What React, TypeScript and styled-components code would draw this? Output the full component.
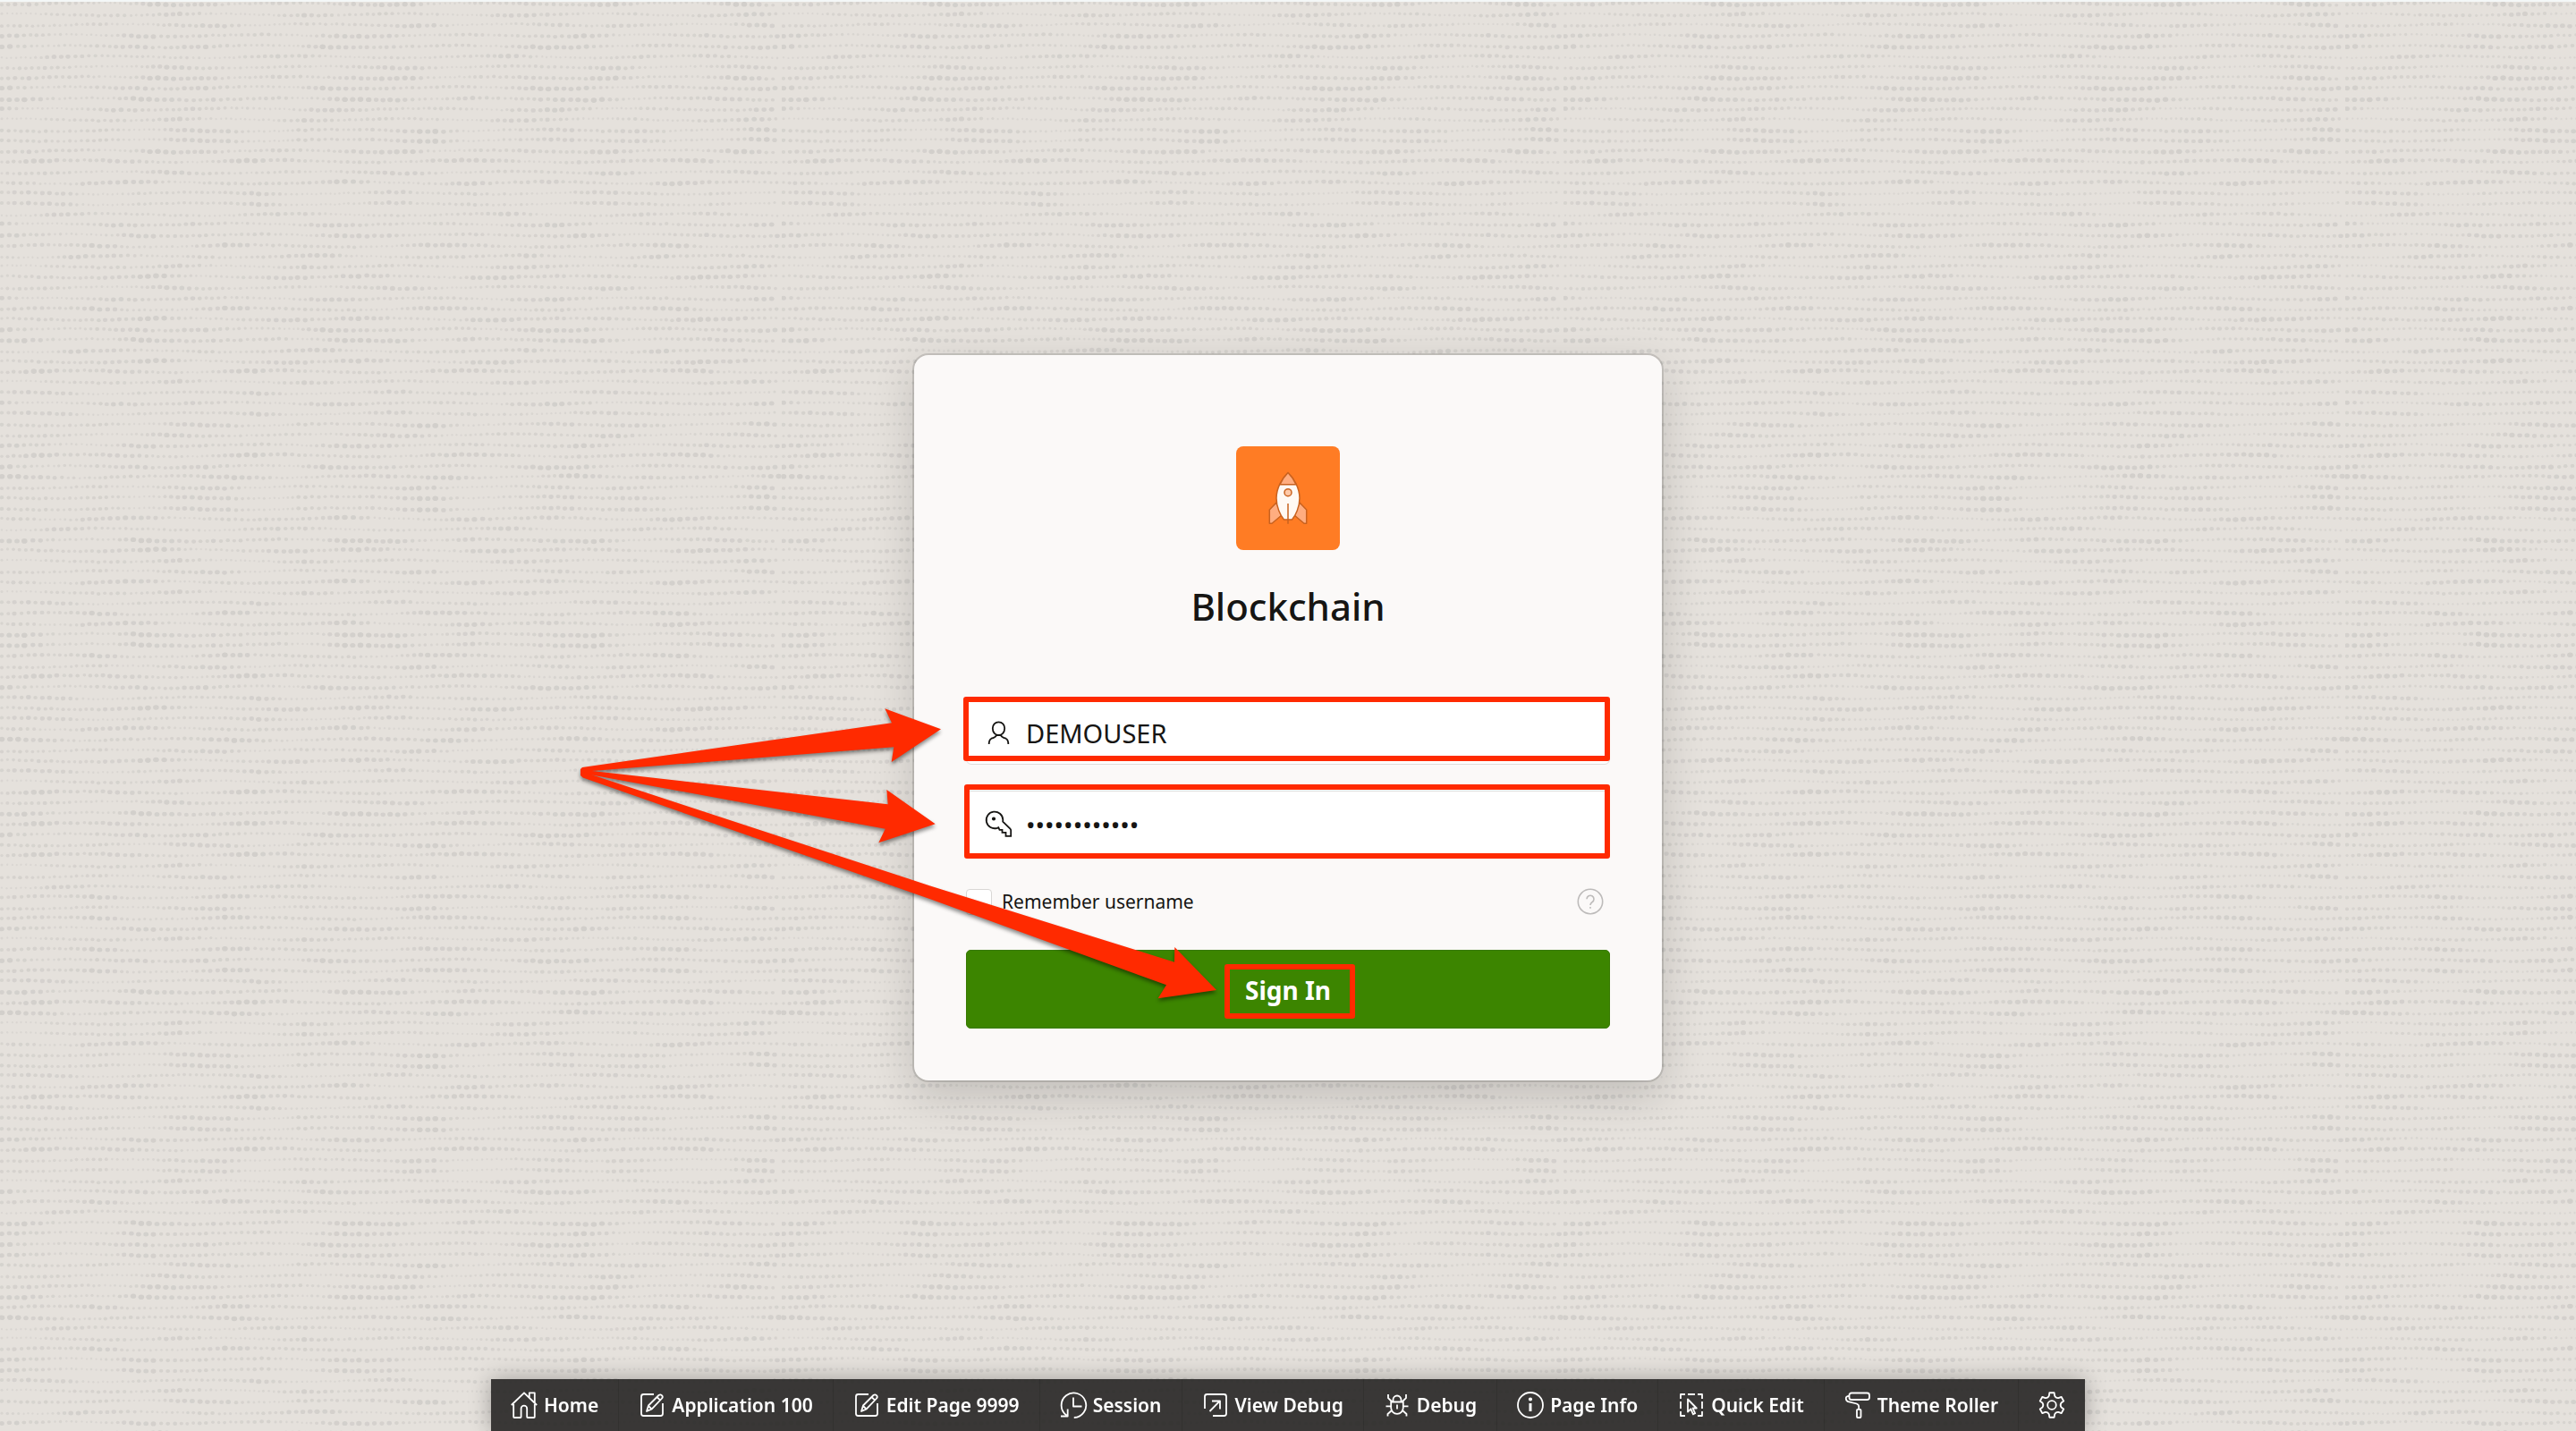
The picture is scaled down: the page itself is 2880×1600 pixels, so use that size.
import React, { useState } from "react";
import styled, { createGlobalStyle } from "styled-components";

/* ---------- woven dot background ---------- */

const TILE_WIDTH = 874;
const ROW_PITCH = 11.75;
const ROW_COUNT = 138;
const VARIANTS = 18;

function randomSource(seed: number) {
  let s = seed;
  return () => {
    s = (s * 1664525 + 1013904223) % 4294967296;
    return s / 4294967296;
  };
}

/** One line of dots whose size swells and shrinks slowly along the row. */
function dotRow(seed: number) {
  const rnd = randomSource(seed * 7919 + 13);
  const phases = [rnd(), rnd(), rnd(), rnd()].map((v) => v * Math.PI * 2);
  const weight = 0.32 + rnd() * 0.25;
  const dots: string[] = [];
  let x = 2;
  while (x < TILE_WIDTH - 3) {
    const t = (x / TILE_WIDTH) * Math.PI * 2;
    const wave =
      Math.sin(t * 4 + phases[0]) * 0.24 +
      Math.sin(t * 7 + phases[1]) * 0.22 +
      Math.sin(t * 12 + phases[2]) * 0.12;
    const size = Math.min(1, Math.max(0, weight + wave + (rnd() - 0.5) * 0.3));
    const rx = 1.1 + size * 2.2;
    const ry = 1.2 + size * 1.6;
    const y = Math.sin(t * 4 + phases[3]) * 1.1 + (rnd() - 0.5) * 0.8;
    const shade = (0.6 + size * 0.4).toFixed(2);
    dots.push(
      `<ellipse cx='${x.toFixed(1)}' cy='${y.toFixed(1)}' rx='${rx.toFixed(1)}' ry='${ry.toFixed(1)}' opacity='${shade}'/>`
    );
    x += 4.8 + size * 3.8 + rnd() * 1;
  }
  return `<g id='r${seed}'>${dots.join("")}</g>`;
}

function weave() {
  const rnd = randomSource(42);
  const height = Math.round(ROW_COUNT * ROW_PITCH);
  const defs = Array.from({ length: VARIANTS }, (_, i) => dotRow(i)).join("");
  const rows = Array.from({ length: ROW_COUNT }, (_, i) => {
    const y = (2.5 + i * ROW_PITCH + (rnd() - 0.5)).toFixed(1);
    return `<use href='#r${Math.floor(rnd() * VARIANTS)}' y='${y}'/>`;
  }).join("");
  const svg = `<svg xmlns='http://www.w3.org/2000/svg' width='${TILE_WIDTH}' height='${height}' fill='#d2cfcb'><defs>${defs}</defs>${rows}</svg>`;
  return `url("data:image/svg+xml,${encodeURIComponent(svg).replace(/'/g, "%27")}")`;
}

/* ---------- layout ---------- */

const GlobalStyle = createGlobalStyle`
  *, *::before, *::after { box-sizing: border-box; }
  body {
    margin: 0;
    font-family: "Noto Sans", "Open Sans", sans-serif;
    color: #161513;
  }
  button, input { font-family: inherit; color: inherit; }
`;

const Page = styled.main`
  display: flex;
  align-items: center;
  justify-content: center;
  min-height: 100vh;
  padding-top: 3px;
  border-top: 2px solid #f4f7f7;
  overflow: hidden;
  background: #e5e1dc ${weave()} 0 0 padding-box;
`;

const Card = styled.section`
  position: relative;
  width: 836px;
  max-width: 100%;
  padding: 102px 58px 58px;
  border-radius: 16px;
  background: #fbf9f8;
  box-shadow: 0 0 0 2px rgba(0, 0, 0, 0.13), 0 16px 48px rgba(0, 0, 0, 0.16);
`;

const CardHeader = styled.header`
  display: flex;
  flex-direction: column;
  align-items: center;
  gap: 35px;
  margin-bottom: 77px;
`;

const AppLogo = styled.svg`
  width: 116px;
  height: 116px;
  border-radius: 8px;
  background: #ff7c24;
`;

const Title = styled.h1`
  margin: 0;
  font-size: 42px;
  line-height: 56px;
  font-weight: 500;
`;

const Form = styled.form`
  display: flex;
  flex-direction: column;
`;

const Fields = styled.div`
  display: grid;
  gap: 29px;
`;

const Field = styled.label`
  display: flex;
  align-items: center;
  gap: 14px;
  height: 72px;
  padding: 0 20px;
  border: 1px solid #dfdddb;
  border-radius: 6px;
  background: #fff;
`;

const FieldIcon = styled.svg`
  flex: none;
  width: 32px;
  height: 32px;
  fill: none;
  stroke: #161513;
  stroke-width: 1.8;
`;

const TextBox = styled.input<{ $size: number }>`
  flex: 1;
  min-width: 0;
  height: 100%;
  padding: 0;
  border: 0;
  outline: 0;
  background: transparent;
  font-size: ${(p) => p.$size}px;

  &[type="password"] {
    padding-top: 4px;
  }
`;

const Options = styled.div`
  display: flex;
  align-items: center;
  justify-content: space-between;
  height: 32px;
  margin: 36px 6px 38px 0;
`;

const Remember = styled.label`
  display: flex;
  align-items: center;
  gap: 11px;
  font-size: 21px;
  line-height: 32px;
`;

const CheckBox = styled.input`
  appearance: none;
  width: 29px;
  height: 29px;
  margin: 0;
  border: 1px solid #d9d7d5;
  border-radius: 4px;
  background: #fff;
  &:checked {
    background: #3c8500;
  }
`;

const HelpButton = styled.button`
  display: flex;
  padding: 0;
  border: 0;
  background: transparent;
  svg {
    width: 32px;
    height: 32px;
    fill: none;
    stroke: #bdbbba;
    stroke-width: 1.6;
  }
`;

const SignIn = styled.button`
  height: 88px;
  padding: 2px 0 0;
  border: 1px solid #377a00;
  border-radius: 5px;
  background: #3c8500;
  color: #fff;
  font-size: 28px;
  font-weight: 700;
`;

/* Call-outs drawn over the form, anchored to the card. */
const Callouts = styled.svg`
  position: absolute;
  left: -382px;
  top: 363px;
  width: 1180px;
  height: 400px;
  pointer-events: none;
  fill: #ff2a00;

  rect {
    fill: none;
    stroke: #ff2a00;
    stroke-width: 6;
    stroke-linejoin: round;
  }
  g {
    filter: drop-shadow(0 3px 2px rgba(0, 0, 0, 0.45));
  }
`;

const Toolbar = styled.nav`
  position: fixed;
  bottom: 0;
  left: 50%;
  transform: translateX(-50%);
  display: flex;
  height: 58px;
  background: rgba(38, 37, 35, 0.9);
  box-shadow: 0 0 24px rgba(0, 0, 0, 0.3);
`;

const ToolButton = styled.button`
  display: flex;
  align-items: center;
  gap: 6px;
  padding: 0 22px 0 21px;
  border: 0;
  border-right: 1px solid rgba(0, 0, 0, 0.12);
  background: transparent;
  color: #fff;
  font-size: 21px;
  font-weight: 600;
  white-space: nowrap;

  &:last-child {
    padding: 0 21px;
    border-right: 0;
  }
  svg {
    width: 32px;
    height: 32px;
    fill: none;
    stroke: #fff;
    stroke-width: 1.8;
    stroke-linejoin: round;
  }
`;

/* ---------- icons ---------- */

function gearPath() {
  const pts: string[] = [];
  for (let i = 0; i < 6; i++) {
    const base = -90 + i * 60;
    const at = (deg: number, r: number) => {
      const a = ((base + deg) * Math.PI) / 180;
      return `${(16 + Math.cos(a) * r).toFixed(2)} ${(16 + Math.sin(a) * r).toFixed(2)}`;
    };
    pts.push(`${i ? "L" : "M"}${at(-11, 14)}L${at(11, 14)}L${at(17, 10.8)}Q${at(30, 8.8)} ${at(43, 10.8)}`);
  }
  return pts.join("") + "Z";
}

const edit = (
  <>
    <path d="M18 4H6.500A2.500 2.500 0 0 0 4 6.500v19A2.500 2.500 0 0 0 6.500 28h19a2.500 2.500 0 0 0 2.500-2.500V14" />
    <path d="M10 23l2-6.500L23.500 5q1.700-1.400 3.400.1t.2 3.400L15.800 20.400zM21.500 7l3.700 3.600M12 17l3.500 3.300" />
  </>
);

const tools: { label: string; icon: React.ReactNode }[] = [
  {
    label: "Home",
    icon: (
      <path d="M4.200 13v16.200q0 .8.8.8h6.800q.8 0 .8-.8V20a3.300 3.300 0 0 1 6.600 0v9.200q0 .8.8.8h7q.8 0 .8-.8V13M1.800 16L16 2.300 30.200 16M21.800 7.800V2.400h6V13.500" />
    ),
  },
  { label: "Application 100", icon: edit },
  { label: "Edit Page 9999", icon: edit },
  {
    label: "Session",
    icon: <path d="M8.500 27.500A13.800 13.800 0 1 1 16.800 30M9.700 20.500V28.500H2M16 7.500v10h9.500" />,
  },
  {
    label: "View Debug",
    icon: (
      <path d="M4 20V6.500A2.500 2.500 0 0 1 6.500 4h19A2.500 2.500 0 0 1 28 6.500v19a2.500 2.500 0 0 1-2.500 2.500H13M9.500 23L20.600 11.700M12 11.500h9v9" />
    ),
  },
  {
    label: "Debug",
    icon: (
      <path d="M9.200 12.500h13.600V19a6.800 6.800 0 0 1-13.600 0zM11.500 12.500V10a4.500 4.500 0 0 1 9 0v2.500M16 15.500v5M3.500 17.300h5.700M22.800 17.300h5.700M6 4v4.200l4.500 4.300M26 4v4.200l-4.500 4.300M5.500 28.500V26l5-4.500M26.500 28.500V26l-5-4.500" />
    ),
  },
  {
    label: "Page Info",
    icon: (
      <>
        <circle cx="16" cy="16" r="14" />
        <circle cx="16" cy="9.500" r="1.200" fill="#fff" />
        <path d="M16 14v9" strokeWidth="3" />
      </>
    ),
  },
  {
    label: "Quick Edit",
    icon: (
      <>
        <path d="M4 9V4h5M12 4h8M23 4h5v5M28 12v8M28 23v5h-5M9 28H4v-5M4 20v-8" />
        <path d="M12 9.500v14l3.400-3.200 2.600 6 2.200-1-2.600-5.800h4.200z" />
      </>
    ),
  },
  {
    label: "Theme Roller",
    icon: (
      <>
        <rect x="6.500" y="2.500" width="22.500" height="7.500" rx="2.500" />
        <path d="M6.500 5.800Q2.800 5.800 2.800 8.500t2.400 3.700l9.500 2.300q2.500.8 2.500 3.300v3" />
        <rect x="15" y="20.800" width="4.500" height="9.200" rx="1" />
      </>
    ),
  },
];

function Rocket() {
  return (
    <AppLogo viewBox="0 0 116 116" role="img" aria-label="Rocket" stroke="#c9621f" strokeWidth="1.500" strokeLinejoin="round">
      <path fill="#ffad80" d="M45 63L37.300 71V86.300H40L51 77zM71 63L78.700 71V86.300H76L65 77z" />
      <path fill="#fff9f4" d="M58 29.500C51 36 45 47 45 58c0 10 4.500 19.500 8.500 24h9C66.500 77.500 71 68 71 58 71 47 65 36 58 29.500z" />
      <path fill="#ffad80" d="M58 29.500C54 33.500 51 38 49 42.700h18C65 38 62 33.500 58 29.500z" />
      <circle fill="#ffc9a8" cx="58" cy="51.700" r="4" />
      <path d="M58 64v22.700" />
    </AppLogo>
  );
}

function Arrows() {
  return (
    <Callouts viewBox="640 760 1180 400" aria-hidden="true">
      <rect x="1080" y="782" width="717" height="66" />
      <rect x="1081" y="880" width="716" height="77" />
      <rect x="1372" y="1081" width="140" height="55" />
      <g>
        <path d="M651 858L997 808.300 989.300 792.300 1052 815.300 996.700 852 999.300 835.300 662 862 649 866V860z" />
        <path d="M650 860L662 862 992.700 899.300 991.300 883 1045.700 921.300 982.300 942.300 989.700 926.700 663 866.700 649 867z" />
        <path d="M650 862L663 866.700 1040 990.500 1313 1075.700 1313.300 1059 1360 1107 1294.700 1116.300 1304 1101.300 1040 1005.300 651.700 869.500 649 867z" />
      </g>
    </Callouts>
  );
}

export default function App() {
  const [user, setUser] = useState("DEMOUSER");
  const [password, setPassword] = useState("blockchain21");
  const [remember, setRemember] = useState(false);

  return (
    <>
      <GlobalStyle />
      <Page>
        <Card>
          <CardHeader>
            <Rocket />
            <Title>Blockchain</Title>
          </CardHeader>
          <Form onSubmit={(e) => e.preventDefault()}>
            <Fields>
              <Field>
                <FieldIcon viewBox="0 0 32 32" aria-hidden="true">
                  <path d="M15.500 4.300c4 0 6.700 3 6.700 6.900 0 4.600-2.800 7.800-6.700 7.800s-6.700-3.200-6.700-7.800c0-3.900 2.700-6.900 6.700-6.900zM13 18.500c0 3-2.500 3-5.500 4.200-2.200 1-2.800 2.500-2.800 6.300M18 18.500c0 3 2.500 3 5.500 4.200 2.200 1 2.800 2.500 2.800 6.300" />
                </FieldIcon>
                <TextBox $size={29} aria-label="Username" value={user} onChange={(e) => setUser(e.target.value)} />
              </Field>
              <Field>
                <FieldIcon viewBox="0 0 32 32" aria-hidden="true">
                  <path d="M20.300 12.500A9.300 9.300 0 1 0 13.800 21.800l1.500-.6 1.200 2.600h3v3h4v4h5.700v-6.300q0-1-.8-1.800l-8.200-8z" />
                  <circle cx="10" cy="11.500" r="1.200" fill="#161513" stroke="#161513" />
                </FieldIcon>
                <TextBox
                  $size={28}
                  type="password"
                  aria-label="Password"
                  value={password}
                  onChange={(e) => setPassword(e.target.value)}
                />
              </Field>
            </Fields>
            <Options>
              <Remember>
                <CheckBox type="checkbox" checked={remember} onChange={(e) => setRemember(e.target.checked)} />
                Remember username
              </Remember>
              <HelpButton type="button" aria-label="Help">
                <svg viewBox="0 0 32 32">
                  <circle cx="16" cy="16" r="13.700" />
                  <path d="M12 13.200a4 4 0 1 1 6 3.500q-2 1.200-2 3.300M16 22v1.700" />
                </svg>
              </HelpButton>
            </Options>
            <SignIn type="submit">Sign In</SignIn>
          </Form>
          <Arrows />
        </Card>
      </Page>
      <Toolbar aria-label="Developer toolbar">
        {tools.map((tool) => (
          <ToolButton key={tool.label} type="button">
            <svg viewBox="0 0 32 32" aria-hidden="true">
              {tool.icon}
            </svg>
            {tool.label}
          </ToolButton>
        ))}
        <ToolButton type="button" aria-label="Settings">
          <svg viewBox="0 0 32 32" aria-hidden="true">
            <path d={gearPath()} />
            <circle cx="16" cy="16" r="4.800" />
          </svg>
        </ToolButton>
      </Toolbar>
    </>
  );
}
